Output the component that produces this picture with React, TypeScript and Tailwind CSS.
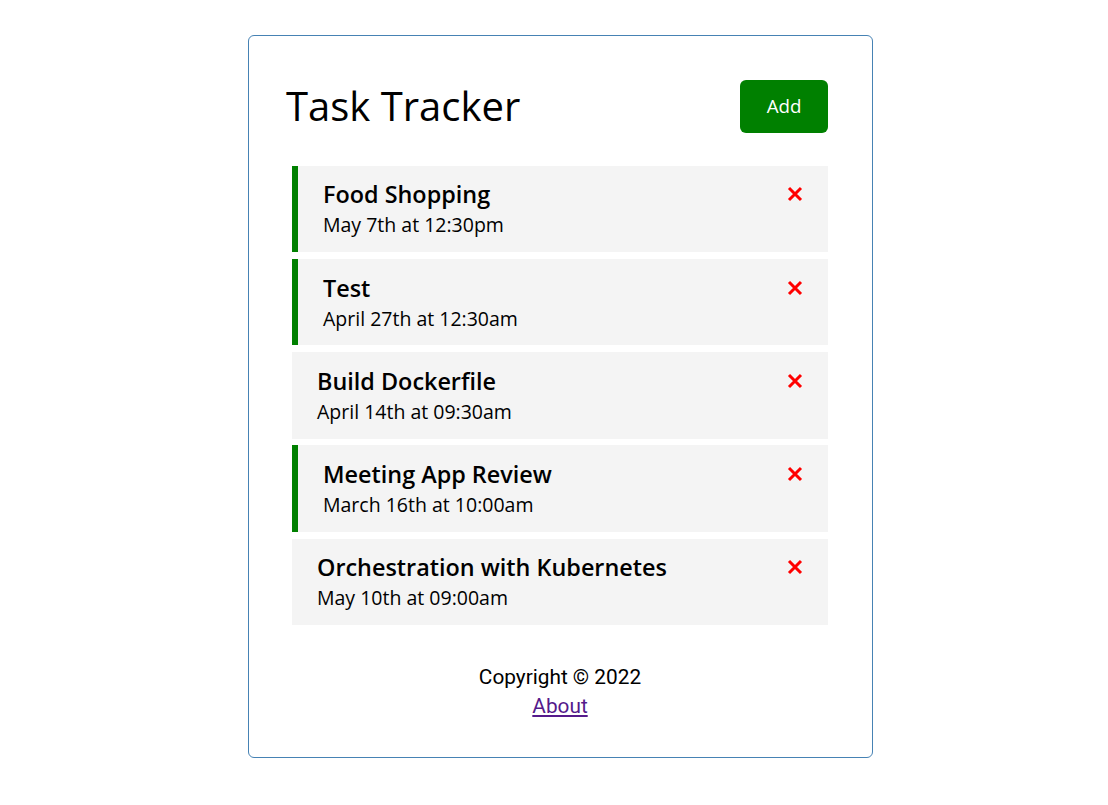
import React, { useState } from 'react';

type Task = {
  id: number;
  text: string;
  day: string;
  reminder: boolean;
};

const initialTasks: Task[] = [
  { id: 1, text: 'Food Shopping', day: 'May 7th at 12:30pm', reminder: true },
  { id: 2, text: 'Test', day: 'April 27th at 12:30am', reminder: true },
  { id: 3, text: 'Build Dockerfile', day: 'April 14th at 09:30am', reminder: false },
  { id: 4, text: 'Meeting App Review', day: 'March 16th at 10:00am', reminder: true },
  { id: 5, text: 'Orchestration with Kubernetes', day: 'May 10th at 09:00am', reminder: false },
];

// thin red cross, same as the delete icon in the screenshot
const TimesIcon: React.FC<{ onClick?: () => void }> = ({ onClick }) => (
  <svg
    onClick={onClick}
    width="16"
    height="16"
    viewBox="0 0 16 16"
    className="cursor-pointer"
    fill="none"
    stroke="#ff0000"
    strokeWidth="3"
  >
    <path d="M2 2L14 14M14 2L2 14" />
  </svg>
);

const TaskItem: React.FC<{ task: Task; onDelete: (id: number) => void; onToggle: (id: number) => void }> = ({
  task,
  onDelete,
  onToggle,
}) => {
  return (
    <div
      onDoubleClick={() => onToggle(task.id)}
      className={`mx-[6px] my-[6.75px] bg-[#f4f4f4] px-[25px] py-[12.75px] cursor-pointer ${
        task.reminder ? 'border-l-[6px] border-l-[#008000]' : ''
      }`}
    >
      <h3 className="flex items-center justify-between text-[23.4px] leading-[32px] font-semibold text-black">
        {task.text}
        <TimesIcon onClick={() => onDelete(task.id)} />
      </h3>
      <p className="text-[19.5px] leading-[29px] text-black">{task.day}</p>
    </div>
  );
};

const App: React.FC = () => {
  const [tasks, setTasks] = useState<Task[]>(initialTasks);

  const deleteTask = (id: number) => setTasks(tasks.filter((t) => t.id !== id));
  const toggleReminder = (id: number) =>
    setTasks(tasks.map((t) => (t.id === id ? { ...t, reminder: !t.reminder } : t)));

  return (
    <div className="min-h-screen bg-white pt-[35px] pl-[12px] font-['Open_Sans',sans-serif]">
      <div className="mx-auto w-[625px] rounded-[6px] border border-[#4682b4] px-[37.5px] pt-[37.5px] pb-[35px]">
        <header className="mb-[27px] flex items-center justify-between">
          <h1 className="text-[40px] leading-[60px] font-normal text-black">Task Tracker</h1>
          <button className="m-[6px] rounded-[6px] bg-[#008000] px-[26.5px] py-[12.5px] text-[18.75px] leading-[28px] text-white">
            Add
          </button>
        </header>

        <div>
          {tasks.length > 0 ? (
            tasks.map((task) => (
              <TaskItem key={task.id} task={task} onDelete={deleteTask} onToggle={toggleReminder} />
            ))
          ) : (
            <p>No Tasks To Show</p>
          )}
        </div>

        <footer className="mt-[38px] text-center font-['Roboto',sans-serif] text-[20.8px] text-black">
          <p className="leading-[28px]">Copyright &copy; 2022</p>
          <a href="#" className="leading-[28px] text-[#551a8b] underline">
            About
          </a>
        </footer>
      </div>
    </div>
  );
};

export default App;
